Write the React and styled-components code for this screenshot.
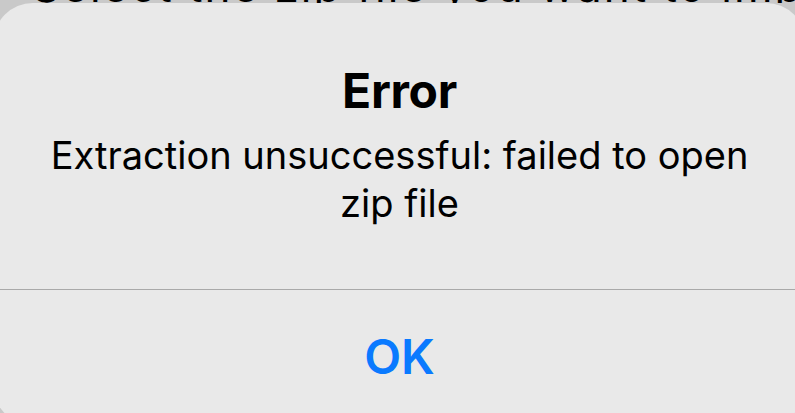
import React from 'react'
import styled, {createGlobalStyle} from 'styled-components'

const GlobalStyle = createGlobalStyle`
  html, body {
    margin: 0;
    padding: 0;
    background: #c9c9c9;
    overflow: hidden;
  }
  body {
    font-family: Inter, "Noto Sans", "Liberation Sans", sans-serif;
    -webkit-font-smoothing: antialiased;
  }
`

export default function App() {
  return (
    <>
      <GlobalStyle/>
      <Backdrop>
        <Peek>
          <PeekText>Select the zip file you want to import</PeekText>
        </Peek>
        <Alert role="alertdialog">
          <Content>
            <Title>Error</Title>
            <Message>Extraction unsuccessful: failed to open zip file</Message>
          </Content>
          <Actions>
            <ActionButton type="button">OK</ActionButton>
          </Actions>
        </Alert>
      </Backdrop>
    </>
  )
}

const Backdrop = styled.div `
  width: 795px;
  height: 413px;
  background: #c9c9c9;
  overflow: hidden;
`

// the line of text behind the alert, only its lowest pixels show
const Peek = styled.div `
  height: 3px;
  overflow: hidden;
  padding-left: 32px;
`

const PeekText = styled.div `
  margin-top: -36px;
  font-size: 44px;
  line-height: 44px;
  color: #000;
  white-space: nowrap;
  letter-spacing: 2px;
`

const Alert = styled.div `
  margin-left: -7px;
  width: 813px;
  height: 422px;
  background: #e9e9e9;
  border-radius: 40px;
  display: flex;
  flex-direction: column;
`

const Content = styled.div `
  display: flex;
  flex-direction: column;
  align-items: center;
  padding: 59px 40px 0;
  height: 287px;
  box-sizing: border-box;
  border-bottom: 1.5px solid #a9a9a9;
`

const Title = styled.h1 `
  margin: 0;
  font-size: 48px;
  line-height: 58px;
  font-weight: 700;
  color: #000;
  letter-spacing: -0.3px;
`

const Message = styled.p `
  margin: 11px 0 0;
  width: 730px;
  text-align: center;
  font-size: 38px;
  line-height: 48px;
  font-weight: 400;
  color: #000;
`

const Actions = styled.div `
  display: flex;
  justify-content: center;
  padding-top: 38px;
`

const ActionButton = styled.button `
  border: none;
  background: none;
  padding: 0;
  font-family: inherit;
  font-size: 48px;
  line-height: 58px;
  font-weight: 600;
  color: #0a7aff;
  cursor: pointer;
`
